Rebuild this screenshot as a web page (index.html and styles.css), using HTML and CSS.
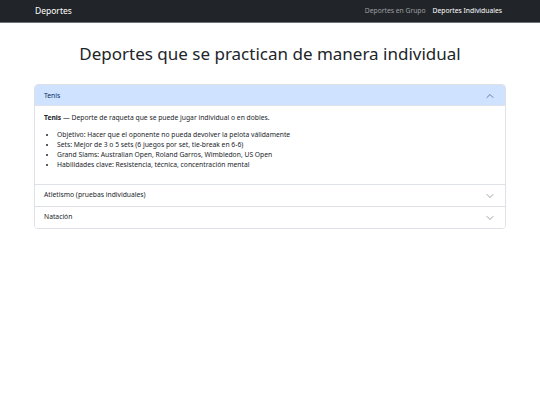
FILE: index.html
```html
<!DOCTYPE html>
<html lang="es">
<head>
<meta charset="utf-8">
<title>Deportes Individuales</title>
<link rel="stylesheet" href="styles.css">
</head>
<body>
<nav class="navbar">
  <div class="nav-inner">
    <a class="brand" href="#">Deportes</a>
    <ul class="nav-links">
      <li><a class="nav-link" href="#">Deportes en Grupo</a></li>
      <li><a class="nav-link active" href="#">Deportes Individuales</a></li>
    </ul>
  </div>
</nav>
<main class="container">
  <h1 class="title">Deportes que se practican de manera individual</h1>
  <div class="accordion">
    <div class="acc-item">
      <button class="acc-btn open">Tenis
        <svg class="chev" viewBox="0 0 16 16"><path d="M2 5L8 11L14 5"/></svg>
      </button>
      <div class="acc-body">
        <p><strong>Tenis</strong> — Deporte de raqueta que se puede jugar individual o en dobles.</p>
        <ul>
          <li>Objetivo: Hacer que el oponente no pueda devolver la pelota válidamente</li>
          <li>Sets: Mejor de 3 o 5 sets (6 juegos por set, tie-break en 6-6)</li>
          <li>Grand Slams: Australian Open, Roland Garros, Wimbledon, US Open</li>
          <li>Habilidades clave: Resistencia, técnica, concentración mental</li>
        </ul>
      </div>
    </div>
    <div class="acc-item">
      <button class="acc-btn">Atletismo (pruebas individuales)
        <svg class="chev" viewBox="0 0 16 16"><path d="M2 5L8 11L14 5"/></svg>
      </button>
    </div>
    <div class="acc-item">
      <button class="acc-btn">Natación
        <svg class="chev" viewBox="0 0 16 16"><path d="M2 5L8 11L14 5"/></svg>
      </button>
    </div>
  </div>
</main>
</body>
</html>
```
FILE: styles.css
```css
* { box-sizing: border-box; }
html, body { margin: 0; padding: 0; }
body {
  font-family: "Noto Sans", "Open Sans", sans-serif;
  font-size: 6.75px;
  line-height: 1.5;
  color: #212529;
  background: #fff;
}
.navbar {
  background: #212529;
  border-bottom: 1px solid #6c757d;
  height: 23px;
}
.nav-inner {
  width: 472px;
  margin: 0 auto;
  padding-right: 4px;
  height: 22px;
  display: flex;
  align-items: center;
  justify-content: space-between;
}
.brand {
  color: #fff;
  text-decoration: none;
  font-size: 8.5px;
  padding-left: 1px;
}
.nav-links {
  list-style: none;
  margin: 0;
  padding: 0;
  display: flex;
  gap: 7px;
}
.nav-link {
  color: rgba(255,255,255,0.55);
  text-decoration: none;
}
.nav-link.active { color: #fff; }
.container {
  width: 472px;
  margin: 0 auto;
}
.title {
  font-weight: 400;
  font-size: 17px;
  line-height: 1.2;
  text-align: center;
  margin: 21px 0 20px;
}
.accordion {
  border: 1px solid #dee2e6;
  border-radius: 4px;
  overflow: hidden;
}
.acc-item + .acc-item { border-top: 1px solid #dee2e6; }
.acc-btn {
  display: flex;
  align-items: center;
  justify-content: space-between;
  width: 100%;
  border: 0;
  background: #fff;
  font: inherit;
  color: #212529;
  text-align: left;
  padding: 5px 11px 5px 9px;
  height: 21px;
}
.acc-btn.open {
  background: #cfe2ff;
  color: #052c65;
  box-shadow: inset 0 -1px 0 #dee2e6;
}
.chev {
  width: 8px;
  height: 8px;
  fill: none;
  stroke: #495057;
  stroke-width: 1.1;
  stroke-linecap: round;
  stroke-linejoin: round;
}
.acc-btn.open .chev { transform: rotate(180deg); stroke: #052c65; }
.acc-body { padding: 7px 9px; }
.acc-body p { margin: 0 0 6.5px; }
.acc-body ul { margin: 0 0 6.5px; padding-left: 13px; }
```
